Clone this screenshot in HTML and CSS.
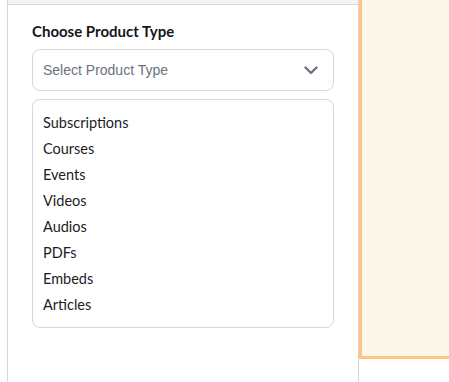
FILE: index.html
```html
<!DOCTYPE html>
<html lang="en">
<head>
  <meta charset="UTF-8">
  <title>Choose Product Type</title>
  <link rel="stylesheet" href="styles.css">
</head>
<body>
  <div class="layout">
    <div class="gutter"></div>

    <!-- Sidebar -->
    <aside class="sidebar">
      <div class="sidebar-top"></div>
      <div class="sidebar-body">
        <label class="field-label" for="productType">Choose Product Type</label>
        <div class="select-box" id="productType">
          <span class="placeholder">Select Product Type</span>
          <svg class="chevron" width="14" height="9" viewBox="0 0 14 9">
            <path d="M1.5 1.5 L7 7 L12.5 1.5" fill="none" stroke="#6b7280" stroke-width="2.4" stroke-linecap="round" stroke-linejoin="round"/>
          </svg>
        </div>
        <ul class="options">
          <li>Subscriptions</li>
          <li>Courses</li>
          <li>Events</li>
          <li>Videos</li>
          <li>Audios</li>
          <li>PDFs</li>
          <li>Embeds</li>
          <li>Articles</li>
        </ul>
      </div>
    </aside>

    <!-- Preview -->
    <main class="preview"></main>
  </div>
</body>
</html>
```

FILE: styles.css
```css
body {
  margin: 0;
  padding: 0;
  background: #fff;
  font-family: Lato, 'Noto Sans', sans-serif;
  color: #1f2430;
}

.layout {
  display: flex;
  align-items: flex-start;
  height: 382px;
  overflow: hidden;
}

.gutter {
  width: 7px;
  flex-shrink: 0;
}

.sidebar {
  width: 350px;
  flex-shrink: 0;
  height: 382px;
  border-left: 1px solid #d6d7de;
  border-right: 1px solid #d6d7de;
}

.sidebar-top {
  height: 4px;
  background: #f4f4f6;
  border-bottom: 1px solid #d6d7de;
}

.sidebar-body {
  padding: 16px 24px 0 24px;
}

.field-label {
  display: block;
  font-size: 15px;
  line-height: 20px;
  font-weight: bold;
  color: #14161c;
}

.select-box {
  margin-top: 8px;
  height: 40px;
  border: 1px solid #d6d7de;
  border-radius: 8px;
  display: flex;
  align-items: center;
  justify-content: space-between;
  padding: 0 15px 0 10px;
}

.placeholder {
  font-family: 'Liberation Sans', Arial, sans-serif;
  font-size: 14px;
  color: #6b7280;
}

.chevron {
  display: block;
}

.options {
  list-style: none;
  margin: 8px 0 0 0;
  padding: 10px 10px 9px 10px;
  border: 1px solid #d6d7de;
  border-radius: 8px;
}

.options li {
  font-size: 14.5px;
  line-height: 26px;
  color: #1a1d26;
}

.preview {
  flex: 1;
  height: 356px;
  background: #fbf7e9;
  border-left: 3px solid #ffc482;
  border-bottom: 3px solid #ffc482;
}
```
